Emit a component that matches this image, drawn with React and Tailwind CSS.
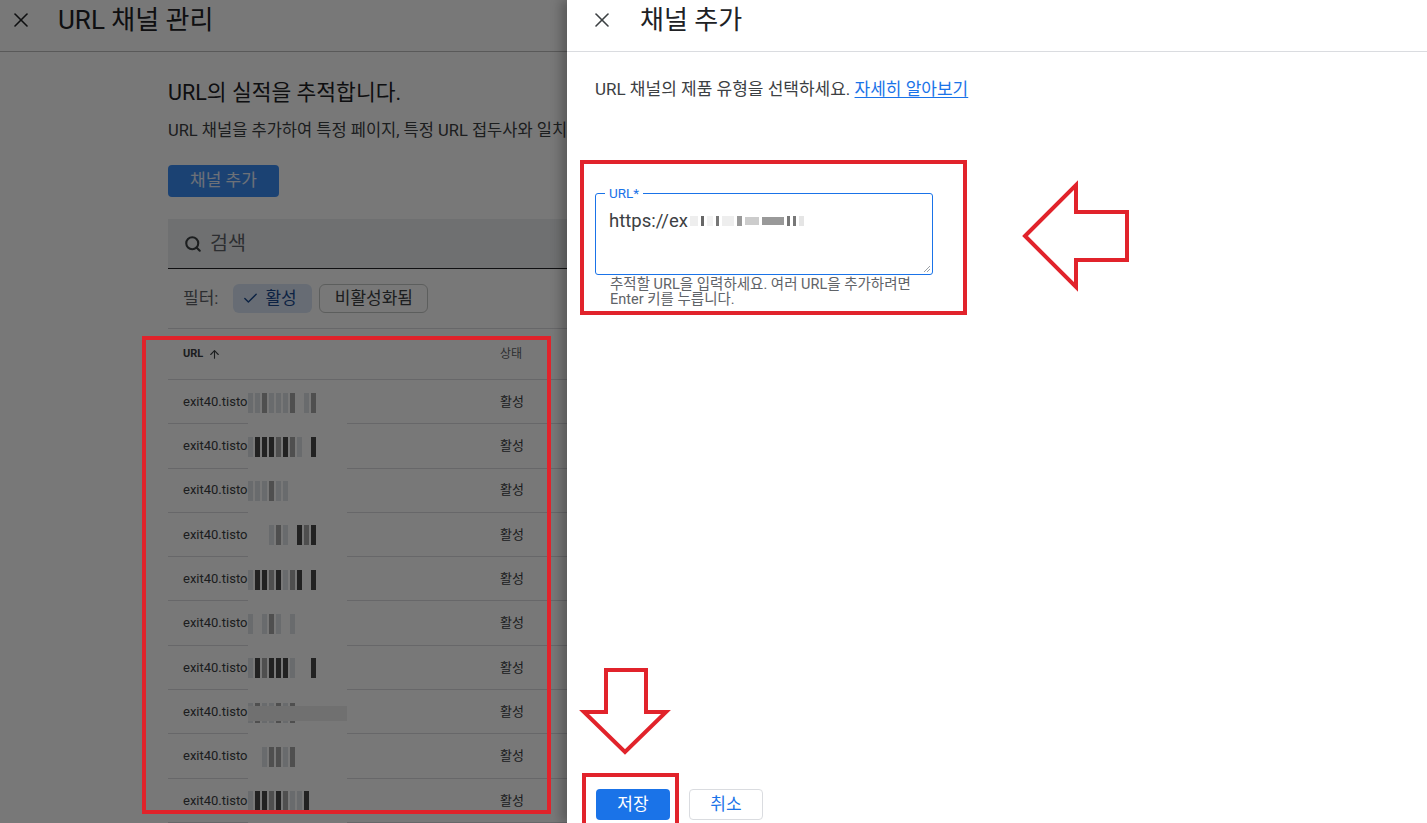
import { X, Search, Check, ArrowUp } from "lucide-react";

const font = { fontFamily: 'Roboto, "Noto Sans CJK KR", sans-serif' };

// redaction pixel strips, one string per row: l = light, m = mid, d = dark, . = blank
const rows = [
  "llmlllm.lm",
  "ldddmdml.d",
  "lllmll....",
  "...lml.dmd",
  "lddmdlmd.d",
  "l.lml.l...",
  "ldmdddl..d",
  "lmllmlm...",
  "..lmmlm...",
  "lddmdmlld.",
];

const barColor = {
  l: "bg-[#dfe3e8]",
  m: "bg-[#a8a8a8]",
  d: "bg-[#4a4a4a]",
  ".": "bg-transparent",
};

function Redacted({ pattern }) {
  return (
    <div className="flex h-[20px] items-stretch gap-[2px]">
      {pattern.split("").map((c, i) => (
        <span key={i} className={`w-[5px] ${barColor[c]}`} />
      ))}
    </div>
  );
}

export default function App() {
  return (
    <div className="relative h-[823px] w-full overflow-hidden bg-white" style={font}>
      {/* background page */}
      <div className="flex h-full flex-col">
        <div className="flex h-[52px] shrink-0 items-center gap-[25px] border-b border-[#bdbdbd] pb-[11px] pl-[9px]">
          <X size={24} strokeWidth={1.6} className="text-[#202124]" />
          <span className="text-[26px] leading-[30px] text-[#202124]">URL 채널 관리</span>
        </div>
        <div className="pl-[168px]">
          <h2 className="pt-[27px] text-[21.5px] leading-[28px] text-[#202124]">URL의 실적을 추적합니다.</h2>
          <p className="mt-[13px] text-[16.5px] leading-[22px] text-[#3c4043] whitespace-nowrap">
            URL 채널을 추가하여 특정 페이지, 특정 URL 접두사와 일치하는 페이지의 실적을 추적합니다.
          </p>
          <button className="mt-[23px] flex h-[32px] w-[111px] items-center justify-center rounded-[4px] bg-[#3b8df5] text-[17px] text-[#e8f0fe]">
            채널 추가
          </button>
          <div className="mt-[22px] flex h-[50px] items-center gap-[8px] border-b border-[#202124] bg-[#eceff1] pl-[16px]">
            <Search size={18} strokeWidth={2.8} className="text-[#3c4043]" />
            <span className="text-[19.5px] text-[#5f6368]">검색</span>
          </div>
          <div className="flex h-[60px] items-center border-b border-[#dadce0] pl-[15px]">
            <span className="mr-[15px] text-[17px] text-[#5f6368]">필터:</span>
            <span className="flex h-[29px] w-[79px] items-center gap-[6px] rounded-[6px] bg-[#dbe6f7] pl-[9px] text-[17px] text-[#1a4a8f]">
              <Check size={17} strokeWidth={2} />
              활성
            </span>
            <span className="ml-[7px] flex h-[29px] w-[109px] items-center justify-center rounded-[6px] border border-[#c4c7c5] text-[17px] text-[#3c4043]">
              비활성화됨
            </span>
          </div>
          <div className="flex h-[51px] items-center border-b border-[#dadce0] pl-[15px] text-[11px] text-[#3c4043]">
            <span className="flex w-[317px] items-center gap-[5px] font-bold">
              URL <ArrowUp size={13} strokeWidth={2} />
            </span>
            <span className="text-[12px] text-[#5f6368]">상태</span>
          </div>
          {rows.map((p, i) => (
            <div key={i} className="relative flex h-[44.3px] items-center border-b border-[#dadce0] pl-[15px] text-[13px] text-[#3c4043]">
              <span className="w-[317px]">exit40.tisto</span>
              <span>활성</span>
              <div className="absolute left-[80px] top-0 flex h-[45px] w-[99px] items-center bg-white">
                <Redacted pattern={p} />
              </div>
              {i === 7 && <div className="absolute left-[80px] top-[16px] h-[15px] w-[99px] bg-[#eeeeee]" />}
            </div>
          ))}
        </div>
      </div>

      {/* scrim */}
      <div className="absolute inset-0 bg-black/[0.53]" />

      {/* side sheet */}
      <div className="absolute bottom-0 right-0 top-0 flex w-[860px] flex-col bg-white shadow-[-6px_0_10px_rgba(0,0,0,0.25)]">
        <div className="flex h-[52px] shrink-0 items-center gap-[26px] border-b border-[#dadce0] pb-[11px] pl-[23px]">
          <X size={24} strokeWidth={1.6} className="text-[#3c4043]" />
          <span className="text-[26px] leading-[30px] text-[#202124]">채널 추가</span>
        </div>
        <div className="px-[28px]">
          <p className="pt-[26px] text-[17px] leading-[22px] text-[#3c4043]">
            URL 채널의 제품 유형을 선택하세요.{" "}
            <span className="text-[#1a73e8] underline underline-offset-2">자세히 알아보기</span>
          </p>
          <div className="relative mt-[93px] h-[82px] w-[338px] rounded-[3px] border border-[#1a73e8]">
            <span className="absolute -top-[9px] left-[9px] bg-white px-[4px] text-[13.5px] leading-[16px] text-[#1a73e8]">URL*</span>
            <div className="flex items-center pl-[13px] pt-[15px] text-[18.5px] leading-[24px] text-[#3c4043]">
              https://ex
              <span className="ml-[2px] flex h-[12px] items-center gap-[3px]">
                <span className="h-[10px] w-[8px] bg-[#eeeeee]" />
                <span className="h-[10px] w-[3px] bg-[#666]" />
                <span className="h-[10px] w-[6px] bg-[#f2f2f2]" />
                <span className="h-[10px] w-[3px] bg-[#777]" />
                <span className="h-[10px] w-[12px] bg-[#eeeeee]" />
                <span className="h-[10px] w-[5px] bg-[#999]" />
                <span className="h-[8px] w-[14px] bg-[#cccccc]" />
                <span className="h-[8px] w-[22px] bg-[#999]" />
                <span className="h-[10px] w-[3px] bg-[#777]" />
                <span className="h-[10px] w-[3px] bg-[#777]" />
                <span className="h-[10px] w-[5px] bg-[#e5e5e5]" />
              </span>
            </div>
            <svg className="absolute bottom-[1px] right-[1px]" width="8" height="8" viewBox="0 0 8 8">
              <path d="M7 1 L1 7 M7 4 L4 7" stroke="#9aa0a6" strokeWidth="1" />
            </svg>
          </div>
          <p className="mt-[2px] pl-[15px] text-[14.5px] leading-[15px] text-[#5f6368]">
            추적할 URL을 입력하세요. 여러 URL을 추가하려면
            <br />
            Enter 키를 누릅니다.
          </p>
        </div>
        <div className="mt-auto flex gap-[19px] pb-[3px] pl-[29px]">
          <button className="h-[31px] w-[74px] rounded-[4px] bg-[#1a73e8] text-[17px] text-white">저장</button>
          <button className="h-[31px] w-[74px] rounded-[4px] border border-[#dadce0] bg-white text-[17px] text-[#1a73e8]">취소</button>
        </div>
      </div>

      {/* annotations */}
      <div className="absolute left-[142px] top-[336px] h-[478px] w-[409px] border-[4px] border-[#e1232b]" />
      <div className="absolute left-[580px] top-[160px] h-[155px] w-[387px] border-[4px] border-[#e1232b]" />
      <div className="absolute left-[582px] top-[773px] h-[60px] w-[97px] border-[4px] border-[#e1232b]" />
      <svg className="absolute left-0 top-0" width="1427" height="823">
        <path d="M1025 236 L1076 185 L1076 212 L1127 212 L1127 260 L1076 260 L1076 287 Z" fill="none" stroke="#e1232b" strokeWidth="4" strokeLinejoin="miter" />
        <path d="M606 670 L646 670 L646 712 L666 712 L625 752 L584 712 L606 712 Z" fill="none" stroke="#e1232b" strokeWidth="4" strokeLinejoin="miter" />
      </svg>
    </div>
  );
}
